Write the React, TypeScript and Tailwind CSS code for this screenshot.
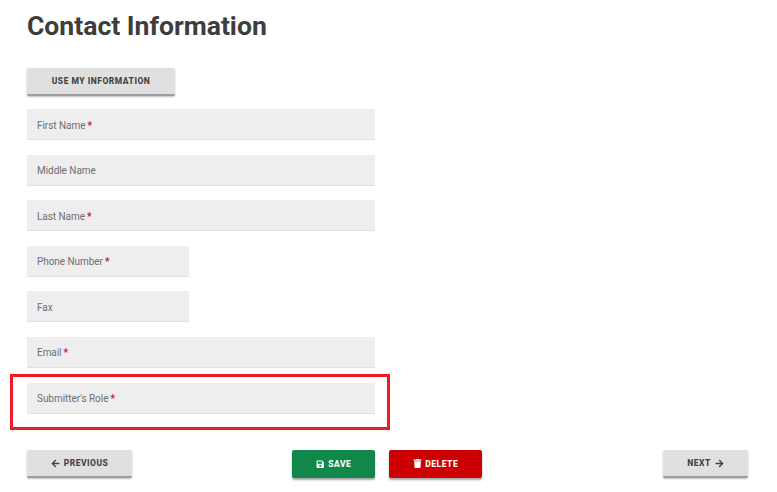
import React from 'react'
import { FaArrowLeft, FaArrowRight, FaSave, FaTrash } from 'react-icons/fa'

function Field({ label, required, short }: { label: string; required?: boolean; short?: boolean }) {
  return (
    <div className={`flex h-[31px] items-center border-b border-[#e0e0e0] bg-[#eeeeee] pl-[10px] pt-[2px] text-[10px] tracking-[-0.05px] text-[#6f6f6f] ${short ? 'w-[162px]' : 'w-[348px]'}`}>
      <span>{label}</span>
      {required && <span className="ml-[2px] font-bold text-[#c8102e]">*</span>}
    </div>
  )
}

const greyBtn = 'flex h-[28px] items-center justify-center rounded-[2px] border-b-2 border-[#9e9e9e] bg-[#e0e0e0] pt-[1px] text-[8.5px] font-extrabold tracking-[0.5px] text-[#424242] shadow-[0_1px_2px_rgba(0,0,0,0.25)]'
const colorBtn = 'flex h-[28px] items-center justify-center rounded-[2px] text-[8.5px] font-extrabold tracking-[0.5px] text-white shadow-[0_2px_2px_rgba(0,0,0,0.35)]'

export default function App() {
  return (
    <div className="relative h-[492px] w-[777px] overflow-hidden bg-white px-[27px] font-['Roboto',sans-serif]">
      <h1 className="h-[68px] pt-[10px] text-[26.55px] leading-[32px] font-bold text-[#3d3d3d]">Contact Information</h1>

      <button className={`${greyBtn} w-[148px]`}>USE MY INFORMATION</button>

      <div className="mt-[13px] flex flex-col gap-[14.6px]">
        <Field label="First Name" required />
        <Field label="Middle Name" />
        <Field label="Last Name" required />
        <Field label="Phone Number" required short />
        <Field label="Fax" short />
        <Field label="Email" required />
        <Field label="Submitter's Role" required />
      </div>

      {/* annotation box around the last field */}
      <div className="absolute top-[374px] left-[10px] h-[56px] w-[380px] border-[3.5px] border-[#ed1c24]" />

      <div className="mt-[36.4px] flex items-start">
        <button className={`${greyBtn} w-[105px] gap-[4px]`}>
          <FaArrowLeft className="text-[9px]" />
          PREVIOUS
        </button>
        <button className={`${colorBtn} ml-[160px] w-[83px] gap-[4px] bg-[#11884a]`}>
          <FaSave className="text-[8.5px]" />
          SAVE
        </button>
        <button className={`${colorBtn} ml-[14px] w-[93px] gap-[3.5px] bg-[#cc0000]`}>
          <FaTrash className="text-[9px]" />
          DELETE
        </button>
        <button className={`${greyBtn} ml-[181px] w-[85px] gap-[4px]`}>
          NEXT
          <FaArrowRight className="text-[9px]" />
        </button>
      </div>
    </div>
  )
}
